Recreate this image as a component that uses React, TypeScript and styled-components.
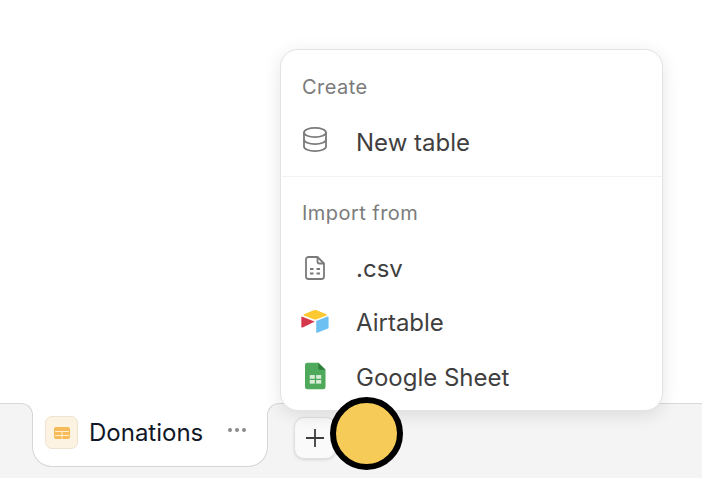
import styled, { createGlobalStyle } from 'styled-components'

const GlobalStyle = createGlobalStyle`
  html, body {
    margin: 0;
    padding: 0;
    background: #fff;
    font-family: Inter, "Liberation Sans", sans-serif;
  }
`

const Page = styled.div`
  position: relative;
  width: 702px;
  height: 478px;
  overflow: hidden;
  display: flex;
  flex-direction: column;
  justify-content: flex-end;
  background: #fff;
`

const TabBar = styled.div`
  height: 75px;
  box-sizing: border-box;
  display: flex;
  align-items: flex-start;
  padding-left: 32px;
  background: #f4f4f4;
  border-top: 1px solid #d9d9d9;
`

const Tab = styled.div`
  position: relative;
  box-sizing: border-box;
  width: 236px;
  height: 64px;
  margin-top: -1px;
  padding: 0 21px 4px 12px;
  display: flex;
  align-items: center;
  background: #fff;
  border: 1.5px solid #d6d6d6;
  border-top: none;
  border-radius: 0 0 20px 20px;
`

// the little curve where the tab's side runs into the bar's top line
const Flare = styled.div<{ $side: 'left' | 'right' }>`
  position: absolute;
  top: 0;
  ${(p) => p.$side}: -12px;
  width: 12px;
  height: 12px;
  background: #fff;

  &::after {
    content: '';
    position: absolute;
    inset: 0;
    box-sizing: border-box;
    background: #f4f4f4;
    border-top: 1.5px solid #d6d6d6;
    border-${(p) => (p.$side === 'left' ? 'right' : 'left')}: 1.5px solid #d6d6d6;
    border-top-${(p) => (p.$side === 'left' ? 'right' : 'left')}-radius: 12px;
  }
`

const TabIcon = styled.div`
  width: 33px;
  height: 33px;
  box-sizing: border-box;
  display: flex;
  align-items: center;
  justify-content: center;
  background: #fdf3e2;
  border: 1px solid #eee2d0;
  border-radius: 7px;
`

const TabName = styled.span`
  margin-left: 11px;
  flex: 1;
  font-size: 24px;
  font-weight: 400;
  color: #111827;
`

const TabMore = styled.div`
  display: flex;
  gap: 3px;
  margin-bottom: 6px;
`

const Dot = styled.span`
  width: 4px;
  height: 4px;
  border-radius: 50%;
  background: #8a8a8a;
`

const AddButton = styled.div`
  box-sizing: border-box;
  width: 42px;
  height: 42px;
  margin: 13px 0 0 26px;
  display: flex;
  align-items: center;
  justify-content: center;
  background: #fafafa;
  border: 1px solid #e0e0e0;
  border-radius: 10px;
  box-shadow: 0 1px 3px rgba(0, 0, 0, 0.12);
`

const Marker = styled.div`
  position: absolute;
  left: 330px;
  top: 397px;
  width: 73px;
  height: 73px;
  box-sizing: border-box;
  background: #f7cb57;
  border: 6px solid #000;
  border-radius: 50%;
`

const Menu = styled.div`
  position: absolute;
  left: 280px;
  top: 49px;
  width: 383px;
  height: 362px;
  box-sizing: border-box;
  padding-left: 1px;
  background: #fff;
  border: 1px solid #e3e3e3;
  border-radius: 18px;
  box-shadow: 0 4px 18px rgba(0, 0, 0, 0.1);
`

const Section = styled.div<{ $divided?: boolean }>`
  padding-top: ${(p) => (p.$divided ? '24px' : '25px')};
  border-top: ${(p) => (p.$divided ? '1px solid #f3f3f3' : 'none')};
`

const SectionTitle = styled.div<{ $gap: number }>`
  padding-left: 20px;
  height: 24px;
  line-height: 24px;
  font-size: 20px;
  font-weight: 400;
  letter-spacing: 0.45px;
  color: #7b7b7b;
  margin-bottom: ${(p) => p.$gap}px;
`

const Item = styled.div<{ $height: number }>`
  height: ${(p) => p.$height}px;
  display: flex;
  align-items: center;
`

const ItemIcon = styled.div<{ $left: number; $lift?: number }>`
  width: 74px;
  padding-left: ${(p) => p.$left}px;
  padding-bottom: ${(p) => p.$lift ?? 0}px;
  box-sizing: border-box;
  display: flex;
  align-items: center;
`

const ItemLabel = styled.span`
  font-size: 24px;
  font-weight: 400;
  color: #3f3f3f;
`

const DatabaseIcon = () => (
  <svg width="24" height="25" viewBox="0 0 24 25" fill="none" stroke="#7a7a7a" strokeWidth="1.8">
    <ellipse cx="12" cy="5.5" rx="11" ry="4.600" />
    <path d="M1 5.500v14c0 2.500 4.900 4.600 11 4.600s11-2.100 11-4.600v-14" />
    <path d="M1 12.500c0 2.500 4.900 4.600 11 4.600s11-2.100 11-4.600" />
  </svg>
)

const CsvIcon = () => (
  <svg width="20" height="24" viewBox="0 0 20 24" fill="none" stroke="#7a7a7a" strokeWidth="1.8">
    <path d="M3.500 1h9L19 7.500v13a2.500 2.500 0 0 1-2.500 2.500h-13A2.500 2.500 0 0 1 1 20.500v-17A2.500 2.500 0 0 1 3.500 1z" strokeLinejoin="round" />
    <path d="M12.500 1v4.500a2 2 0 0 0 2 2H19" strokeLinejoin="round" />
    <path d="M5 13h3.500M11.500 13H15M5 17.500h3.500M11.500 17.500H15" strokeWidth="2" />
  </svg>
)

const AirtableIcon = () => (
  <svg width="28" height="23" viewBox="0.8 0.2 28 23.200">
    <path d="M13.400.5 3.600 4.400c-.6.2-.6 1 0 1.300l9.900 3.900c1 .4 2 .4 3 0l9.900-3.900c.6-.3.6-1.100 0-1.300L16.500.5c-1-.4-2.100-.4-3.100 0z" fill="#fcc932" />
    <path d="M16 11.800V22.500c0 .5.500.800 1 .600l11-4.300c.300-.100.500-.400.500-.700V7.400c0-.500-.500-.800-1-.600l-11 4.300c-.300.100-.500.400-.500.700z" fill="#6cc0f2" />
    <path d="M13.800 12.300 10.500 13.900l-.300.200-7.900 3.800c-.500.200-1.300-.100-1.300-.700V7.500c0-.200.100-.400.300-.500.100-.100.200-.200.400-.100h.300l11.700 4.600c.600.200.600 1 .100 1.300z" fill="#d5384a" />
  </svg>
)

const SheetIcon = () => (
  <svg width="21" height="28" viewBox="0 0 22 28">
    <path d="M2.500 0H14l7.500 7.500v18a2.500 2.500 0 0 1-2.500 2.500H2.500A2.500 2.500 0 0 1 0 25.500v-23A2.500 2.500 0 0 1 2.500 0z" fill="#4fa95a" />
    <path d="M14 0l7.500 7.500H16a2 2 0 0 1-2-2z" fill="#2f7d3c" />
    <path d="M5 13h12v9H5z" fill="#d8ecd8" />
    <path d="M11 13v9M5 17.500h12" stroke="#4fa95a" strokeWidth="1.400" />
  </svg>
)

const TableIcon = () => (
  <svg width="16" height="12" viewBox="0 0 16 12" fill="none">
    <rect width="16" height="12" rx="2" fill="#f7bb5a" />
    <path d="M1 4.500h14M1 8.500h14M8 4.500v7" stroke="#fdeecf" />
  </svg>
)

const PlusIcon = () => (
  <svg width="20" height="20" viewBox="0 0 20 20" stroke="#3d3d3d" strokeWidth="1.800">
    <path d="M10 1v18M1 10h18" />
  </svg>
)

export default function App() {
  return (
    <Page>
      <GlobalStyle />
      <TabBar>
        <Tab>
          <Flare $side="left" />
          <Flare $side="right" />
          <TabIcon>
            <TableIcon />
          </TabIcon>
          <TabName>Donations</TabName>
          <TabMore>
            <Dot />
            <Dot />
            <Dot />
          </TabMore>
        </Tab>
        <AddButton>
          <PlusIcon />
        </AddButton>
      </TabBar>

      <Menu>
        <Section>
          <SectionTitle $gap={9}>Create</SectionTitle>
          <Item $height={68}>
            <ItemIcon $left={21} $lift={5}>
              <DatabaseIcon />
            </ItemIcon>
            <ItemLabel>New table</ItemLabel>
          </Item>
        </Section>
        <Section $divided>
          <SectionTitle $gap={16}>Import from</SectionTitle>
          <Item $height={54}>
            <ItemIcon $left={23}>
              <CsvIcon />
            </ItemIcon>
            <ItemLabel>.csv</ItemLabel>
          </Item>
          <Item $height={54}>
            <ItemIcon $left={19} $lift={1}>
              <AirtableIcon />
            </ItemIcon>
            <ItemLabel>Airtable</ItemLabel>
          </Item>
          <Item $height={56}>
            <ItemIcon $left={23} $lift={2}>
              <SheetIcon />
            </ItemIcon>
            <ItemLabel>Google Sheet</ItemLabel>
          </Item>
        </Section>
      </Menu>

      <Marker />
    </Page>
  )
}
